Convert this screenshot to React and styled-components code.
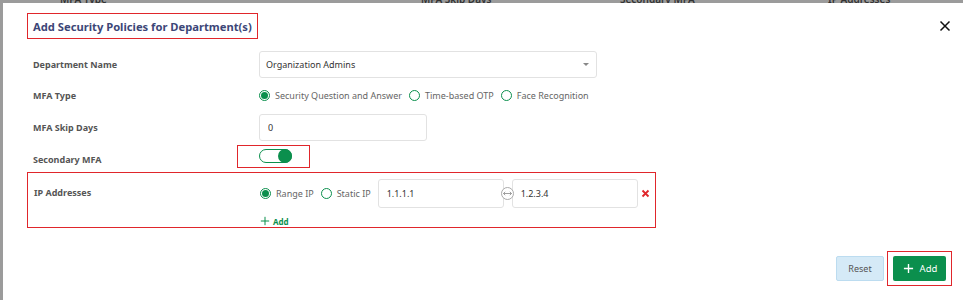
import { useState } from "react";
import styled, { createGlobalStyle } from "styled-components";

const GlobalStyle = createGlobalStyle`
  * { box-sizing: border-box; }
  body {
    margin: 0;
    font-family: "Noto Sans", "Open Sans", sans-serif;
    background: #9b9b9b;
  }
`;

const green = "#0b8f4d";
const red = "#e0262b";

const Page = styled.div`
  position: relative;
  width: 963px;
  height: 300px;
  overflow: hidden;
  background: #9b9b9b;
`;

const BehindHeader = styled.div`
  position: relative;
  height: 4px;
  font-size: 10px;
  font-weight: 600;
  color: #333;
  line-height: 10px;
  overflow: hidden;
`;

const BehindCell = styled.span`
  position: absolute;
  top: -6px;
  left: ${(p) => p.x}px;
`;

const Modal = styled.div`
  position: absolute;
  top: 3px;
  left: 3px;
  right: 0;
  bottom: 0;
  background: #fff;
  padding: 10px 11px 0 24px;
  display: flex;
  flex-direction: column;
`;

const Header = styled.div`
  display: flex;
  align-items: center;
  justify-content: space-between;
  height: 26px;
`;

const Title = styled.h2`
  margin: 0;
  padding: 0 5px 0 5px;
  height: 26px;
  display: flex;
  align-items: center;
  border: 1px solid ${red};
  font-size: 11.2px;
  font-weight: 700;
  color: #3c4677;
  white-space: nowrap;
`;

const CloseButton = styled.button`
  border: 0;
  background: none;
  padding: 0;
  width: 14px;
  height: 14px;
  cursor: pointer;
  display: flex;
`;

const Form = styled.div`
  display: flex;
  flex-direction: column;
  margin-top: 10px;
`;

const Row = styled.div`
  display: grid;
  grid-template-columns: 226px 1fr;
  align-items: ${(p) => (p.top ? "start" : "center")};
  min-height: ${(p) => p.h || 32}px;
  padding-left: 6px;
`;

const Label = styled.div`
  font-size: 9px;
  font-weight: 700;
  color: #555;
  white-space: nowrap;
  padding-top: ${(p) => p.pt || 0}px;
`;

const Select = styled.div`
  width: 338px;
  height: 27px;
  border: 1px solid #e2e2e2;
  border-radius: 3px;
  display: flex;
  align-items: center;
  justify-content: space-between;
  padding: 0 7px 0 6px;
  font-size: 9px;
  color: #333;
`;

const Caret = styled.span`
  width: 0;
  height: 0;
  border-left: 3.5px solid transparent;
  border-right: 3.5px solid transparent;
  border-top: 3.5px solid #888;
`;

const RadioGroup = styled.div`
  display: flex;
  align-items: center;
  gap: 7px;
`;

const RadioItem = styled.label`
  display: flex;
  align-items: center;
  gap: 5px;
  font-size: 9px;
  color: #666;
  white-space: nowrap;
  cursor: pointer;
`;

const RadioCircle = styled.span`
  flex: none;
  width: 11px;
  height: 11px;
  border-radius: 50%;
  border: 1px solid ${green};
  display: flex;
  align-items: center;
  justify-content: center;
  &::after {
    content: "";
    width: 7px;
    height: 7px;
    border-radius: 50%;
    background: ${(p) => (p.checked ? green : "transparent")};
  }
`;

const TextInput = styled.input`
  width: ${(p) => p.w}px;
  height: ${(p) => p.h || 27}px;
  border: 1px solid #e2e2e2;
  border-radius: 3px;
  padding: 0 8px;
  font-family: inherit;
  font-size: 9px;
  color: #333;
  outline: none;
`;

const ToggleBox = styled.div`
  display: flex;
  align-items: center;
  margin-left: -22px;
  margin-bottom: 3px;
  width: 73px;
  height: 23px;
  padding-left: 21px;
  border: 1px solid ${red};
`;

const Switch = styled.button`
  width: 33px;
  height: 14px;
  border-radius: 7px;
  border: 1px solid ${green};
  background: #fff;
  padding: 0;
  display: flex;
  align-items: center;
  justify-content: ${(p) => (p.$on ? "flex-end" : "flex-start")};
  cursor: pointer;
  &::after {
    content: "";
    width: 14px;
    height: 14px;
    margin: -1px;
    border-radius: 50%;
    background: ${green};
  }
`;

const IpBox = styled.div`
  width: 629px;
  padding: 6px 0 1px 0;
  border: 1px solid ${red};
`;

const IpControls = styled.div`
  display: flex;
  flex-direction: column;
  gap: 8px;
`;

const IpLine = styled.div`
  display: flex;
  align-items: center;
  gap: 7px;
`;

const RangePair = styled.div`
  display: flex;
  align-items: center;
`;

const RangeIcon = styled.span`
  width: 13px;
  height: 13px;
  border-radius: 50%;
  border: 1px solid #aaa;
  display: flex;
  align-items: center;
  justify-content: center;
  margin: 0 -2.5px;
  background: #fff;
  position: relative;
  z-index: 1;
`;

const RemoveButton = styled.button`
  border: 0;
  background: none;
  padding: 0;
  margin-left: -4px;
  display: flex;
  cursor: pointer;
`;

const AddLink = styled.button`
  border: 0;
  background: none;
  padding: 0;
  height: 10px;
  display: flex;
  align-items: center;
  gap: 3px;
  font-family: inherit;
  font-size: 8px;
  font-weight: 700;
  color: ${green};
  cursor: pointer;
`;

const Footer = styled.div`
  margin-top: auto;
  margin-bottom: 14px;
  display: flex;
  justify-content: flex-end;
  align-items: center;
  gap: 3px;
`;

const ResetButton = styled.button`
  height: 25px;
  width: 48px;
  padding: 0;
  border: 1px solid #bcdcf0;
  border-radius: 2px;
  background: #d5eaf7;
  font-family: inherit;
  font-size: 9px;
  color: #555;
  cursor: pointer;
`;

const PrimaryBox = styled.div`
  display: flex;
  padding: 4px 5px;
  border: 1px solid ${red};
`;

const PrimaryButton = styled.button`
  height: 25px;
  width: 53px;
  padding: 0 0 0 1px;
  border: 0;
  border-radius: 2px;
  background: ${green};
  display: flex;
  align-items: center;
  justify-content: center;
  gap: 6px;
  font-family: inherit;
  font-size: 9.5px;
  color: #fff;
  cursor: pointer;
`;

function Plus({ size, color, width = 1.4 }) {
  return (
    <svg width={size} height={size} viewBox="0 0 12 12">
      <path d="M6 1v10M1 6h10" stroke={color} strokeWidth={width} />
    </svg>
  );
}

function Radio({ checked, label, onClick }) {
  return (
    <RadioItem onClick={onClick}>
      <RadioCircle checked={checked} />
      {label}
    </RadioItem>
  );
}

export default function App() {
  const [mfa, setMfa] = useState("sqa");
  const [ipType, setIpType] = useState("range");
  const [secondary, setSecondary] = useState(true);

  return (
    <Page>
      <GlobalStyle />
      <BehindHeader>
        <BehindCell x={60}>MFA Type</BehindCell>
        <BehindCell x={421}>MFA Skip Days</BehindCell>
        <BehindCell x={620}>Secondary MFA</BehindCell>
        <BehindCell x={828}>IP Addresses</BehindCell>
      </BehindHeader>
      <Modal>
        <Header>
          <Title>Add Security Policies for Department(s)</Title>
          <CloseButton aria-label="Close">
            <svg width="14" height="14" viewBox="0 0 14 14">
              <path d="M2.5 2.5l9 9M11.5 2.5l-9 9" stroke="#111" strokeWidth="1.5" />
            </svg>
          </CloseButton>
        </Header>

        <Form>
          <Row h={31}>
            <Label>Department Name</Label>
            <Select>
              Organization Admins
              <Caret />
            </Select>
          </Row>
          <Row h={31}>
            <Label>MFA Type</Label>
            <RadioGroup>
              <Radio checked={mfa === "sqa"} onClick={() => setMfa("sqa")} label="Security Question and Answer" />
              <Radio checked={mfa === "otp"} onClick={() => setMfa("otp")} label="Time-based OTP" />
              <Radio checked={mfa === "face"} onClick={() => setMfa("face")} label="Face Recognition" />
            </RadioGroup>
          </Row>
          <Row h={32}>
            <Label>MFA Skip Days</Label>
            <TextInput w={168} defaultValue="0" />
          </Row>
          <Row h={29}>
            <Label pt={3}>Secondary MFA</Label>
            <div>
              <ToggleBox>
                <Switch $on={secondary} onClick={() => setSecondary(!secondary)} aria-label="Secondary MFA" />
              </ToggleBox>
            </div>
          </Row>
          <IpBox>
            <Row top h={10}>
              <Label pt={7}>IP Addresses</Label>
              <IpControls>
                <IpLine>
                  <RadioGroup>
                    <Radio checked={ipType === "range"} onClick={() => setIpType("range")} label="Range IP" />
                    <Radio checked={ipType === "static"} onClick={() => setIpType("static")} label="Static IP" />
                  </RadioGroup>
                  <RangePair>
                    <TextInput w={126} h={29} defaultValue="1.1.1.1" />
                    <RangeIcon>
                      <svg width="9" height="5" viewBox="0 0 9 5">
                        <path d="M0.5 2.5h8M2.2 0.8L0.5 2.5l1.7 1.7M6.8 0.8l1.7 1.7-1.7 1.7" stroke="#888" strokeWidth="0.8" fill="none" />
                      </svg>
                    </RangeIcon>
                    <TextInput w={126} h={29} defaultValue="1.2.3.4" />
                  </RangePair>
                  <RemoveButton aria-label="Remove">
                    <svg width="9" height="9" viewBox="0 0 9 9">
                      <path d="M1.5 1.5l6 6M7.5 1.5l-6 6" stroke={red} strokeWidth="1.8" />
                    </svg>
                  </RemoveButton>
                </IpLine>
                <AddLink>
                  <Plus size={10} color={green} width={1.2} />
                  Add
                </AddLink>
              </IpControls>
            </Row>
          </IpBox>
        </Form>

        <Footer>
          <ResetButton>Reset</ResetButton>
          <PrimaryBox>
            <PrimaryButton>
              <Plus size={11} color="#fff" width={1.5} />
              Add
            </PrimaryButton>
          </PrimaryBox>
        </Footer>
      </Modal>
    </Page>
  );
}
